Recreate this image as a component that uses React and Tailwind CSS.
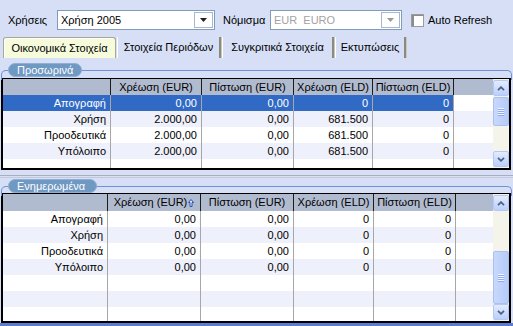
import React from "react";

const TRI = "M0 0h7L3.5 4z";

const Combo = ({ width, value, disabled }) => (
  <div className={`flex h-[20px] ${width} border border-[#7f9db9] bg-white`}>
    <div
      className={`flex-1 flex items-center pl-[3px] whitespace-pre ${
        disabled ? "text-[#a3a3a3]" : "text-black"
      }`}
    >
      {value}
    </div>
    <div className="w-[19px] m-[1px] border border-[#a7b6d3] bg-white flex items-center justify-center">
      <svg width="7" height="4" viewBox="0 0 7 4">
        <path d={TRI} fill={disabled ? "#9a9a9a" : "#202020"} />
      </svg>
    </div>
  </div>
);

const Tab = ({ label, width, active }) =>
  active ? (
    <div
      className={`${width} h-[21px] flex items-center justify-center rounded-t-[3px] border border-b-0 border-[#a6a892] bg-[#f6fbdc] shadow-[inset_1px_1px_0_#ffffff]`}
    >
      {label}
    </div>
  ) : (
    <div
      className={`${width} h-[21px] flex items-center justify-center border-l border-white border-r-2 border-r-[#8b8a80] shadow-[1px_0_0_#c9c7b6]`}
    >
      {label}
    </div>
  );

const Chevron = ({ up }) => (
  <svg width="8" height="5" viewBox="0 0 8 5">
    <path
      d={up ? "M1 4.2L4 1.2L7 4.2" : "M1 0.8L4 3.8L7 0.8"}
      fill="none"
      stroke="#4d6185"
      strokeWidth="1.8"
    />
  </svg>
);

const ScrollButton = ({ up }) => (
  <div className="h-[16px] shrink-0 rounded-[2px] border border-[#b4c8f5] bg-gradient-to-b from-[#e3ebfe] to-[#bbcffa] flex items-center justify-center">
    <Chevron up={up} />
  </div>
);

const ScrollBar = ({ spacer, thumb }) => (
  <div className="w-[16px] shrink-0 flex flex-col bg-[#f5f4ea] py-[1px]">
    <ScrollButton up />
    <div className="flex-1 flex flex-col">
      <div className={`${spacer} shrink-0`} />
      <div
        className={`${thumb} shrink-0 rounded-[2px] border border-[#aac0f2] bg-gradient-to-r from-[#c9d8fc] to-[#b5cbf8] flex flex-col items-center justify-center gap-[1px]`}
      >
        {[0, 1, 2, 3].map((i) => (
          <div key={i} className="w-[6px] h-[1px] bg-[#eef3fe] shadow-[0_1px_0_#8eaaf0]" />
        ))}
      </div>
    </div>
    <ScrollButton />
  </div>
);

const SortArrow = () => (
  <svg width="6" height="8" viewBox="0 0 6 8" className="ml-[1px]">
    <path
      d="M3 0.5L5.5 3.5H4V7.5H2V3.5H0.5Z"
      fill="#dfe8ff"
      stroke="#2a4fb8"
      strokeWidth="1"
    />
  </svg>
);

const Grid = ({ widths, heads, data, sel, headH, gridH, bodyRows, sortIdx, spacer, thumb }) => (
  <div className={`flex ml-[1px] w-[510px] ${gridH} border-x-2 border-t border-b-2 border-black bg-white overflow-hidden`}>
    <div className="flex-1 flex flex-col min-w-0">
      <div className={`flex ${headH} shrink-0 bg-[#b1bbcf]`}>
        {heads.map((h, i) => (
          <div
            key={i}
            className={`${widths[i]} shrink-0 border-r border-[#1c1c1c] flex items-center justify-center whitespace-nowrap`}
          >
            {h}
            {sortIdx === i && <SortArrow />}
          </div>
        ))}
      </div>
      <div className="flex-1 overflow-hidden">
        {Array.from({ length: bodyRows }).map((_, r) => {
          const row = data[r] || [];
          const isSel = r === sel;
          return (
            <div key={r} className={`flex h-[16px] ${r % 2 === 1 ? "bg-[#eef0fb]" : "bg-white"}`}>
              {widths.map((w, c) => (
                <div
                  key={c}
                  className={`${w} shrink-0 border-r border-[#a7a7a7] flex items-center justify-end pr-[4px] whitespace-nowrap ${
                    isSel ? "bg-[#316ac5] text-white" : ""
                  }`}
                >
                  {row[c]}
                </div>
              ))}
              <div className="flex-1" />
            </div>
          );
        })}
      </div>
    </div>
    <ScrollBar spacer={spacer} thumb={thumb} />
  </div>
);

const Group = ({ title, labelW, children, className }) => (
  <div className={`relative ${className}`}>
    <div className="absolute top-[7px] left-[1px] w-[511px] h-[10px] border-t border-x border-[#7191d6] rounded-t-[5px]" />
    <div
      className={`absolute top-0 left-[8px] ${labelW} h-[14px] rounded-full bg-[#6f98c3] border border-[#8fb0d4] text-white flex items-center pl-[8px] leading-none`}
    >
      {title}
    </div>
    {children}
  </div>
);

const HEADS = ["", "Χρέωση (EUR)", "Πίστωση (EUR)", "Χρέωση (ELD)", "Πίστωση (ELD)"];

const DATA1 = [
  ["Απογραφή", "0,00", "0,00", "0", "0"],
  ["Χρήση", "2.000,00", "0,00", "681.500", "0"],
  ["Προοδευτικά", "2.000,00", "0,00", "681.500", "0"],
  ["Υπόλοιπο", "2.000,00", "0,00", "681.500", "0"],
];

const DATA2 = [
  ["Απογραφή", "0,00", "0,00", "0", "0"],
  ["Χρήση", "0,00", "0,00", "0", "0"],
  ["Προοδευτικά", "0,00", "0,00", "0", "0"],
  ["Υπόλοιπο", "0,00", "0,00", "0", "0"],
];

export default function App() {
  return (
    <div className="w-[513px] h-[326px] overflow-hidden bg-[#d6dff5] text-black text-[11px] font-['Liberation_Sans',Arial,sans-serif] flex flex-col">
      {/* top filters */}
      <div className="flex items-center h-[20px] mt-[10px] pl-[8px] shrink-0">
        <span className="w-[49px]">Χρήσεις</span>
        <Combo width="w-[158px]" value="Χρήση 2005" />
        <span className="ml-[8px] w-[47px]">Νόμισμα</span>
        <Combo width="w-[132px]" value="EUR  EURO" disabled />
        <div className="ml-[9px] w-[13px] h-[13px] border border-[#9c9c9c] bg-white shadow-[inset_2px_1px_0_#8c8c8c]" />
        <span className="ml-[4px]">Auto Refresh</span>
      </div>

      {/* tabs */}
      <div className="flex mt-[7px] pl-[3px] gap-[1px] shrink-0">
        <Tab label="Οικονομικά Στοιχεία" width="w-[113px]" active />
        <Tab label="Στοιχεία Περιόδων" width="w-[104px]" />
        <Tab label="Συγκριτικά Στοιχεία" width="w-[112px]" />
        <Tab label="Εκτυπώσεις" width="w-[71px]" />
      </div>

      {/* Προσωρινά */}
      <Group title="Προσωρινά" labelW="w-[74px]" className="mt-[5px] pt-[15px] shrink-0">
        <Grid
          widths={["w-[108px]", "w-[91px]", "w-[92px]", "w-[79px]", "w-[81px]"]}
          heads={HEADS}
          data={DATA1}
          sel={0}
          headH="h-[16px]"
          gridH="h-[92px]"
          bodyRows={5}
          spacer="h-[1px]"
          thumb="h-[29px]"
        />
      </Group>

      {/* splitter */}
      <div className="h-[9px] shrink-0 flex flex-col pt-[5px]">
        <div className="h-[1px] bg-[#a9adbd]" />
        <div className="h-[1px]" />
        <div className="h-[1px] bg-[#c4c9d8]" />
      </div>

      {/* Ενημερωμένα */}
      <Group title="Ενημερωμένα" labelW="w-[89px]" className="pt-[14px] shrink-0">
        <Grid
          widths={["w-[105px]", "w-[93px]", "w-[93px]", "w-[80px]", "w-[82px]"]}
          heads={HEADS}
          data={DATA2}
          headH="h-[17px]"
          gridH="h-[130px]"
          bodyRows={7}
          sortIdx={1}
          spacer="h-[40px]"
          thumb="h-[53px]"
        />
      </Group>

      <div className="flex-1 bg-[#5b7dcd]" />
    </div>
  );
}
